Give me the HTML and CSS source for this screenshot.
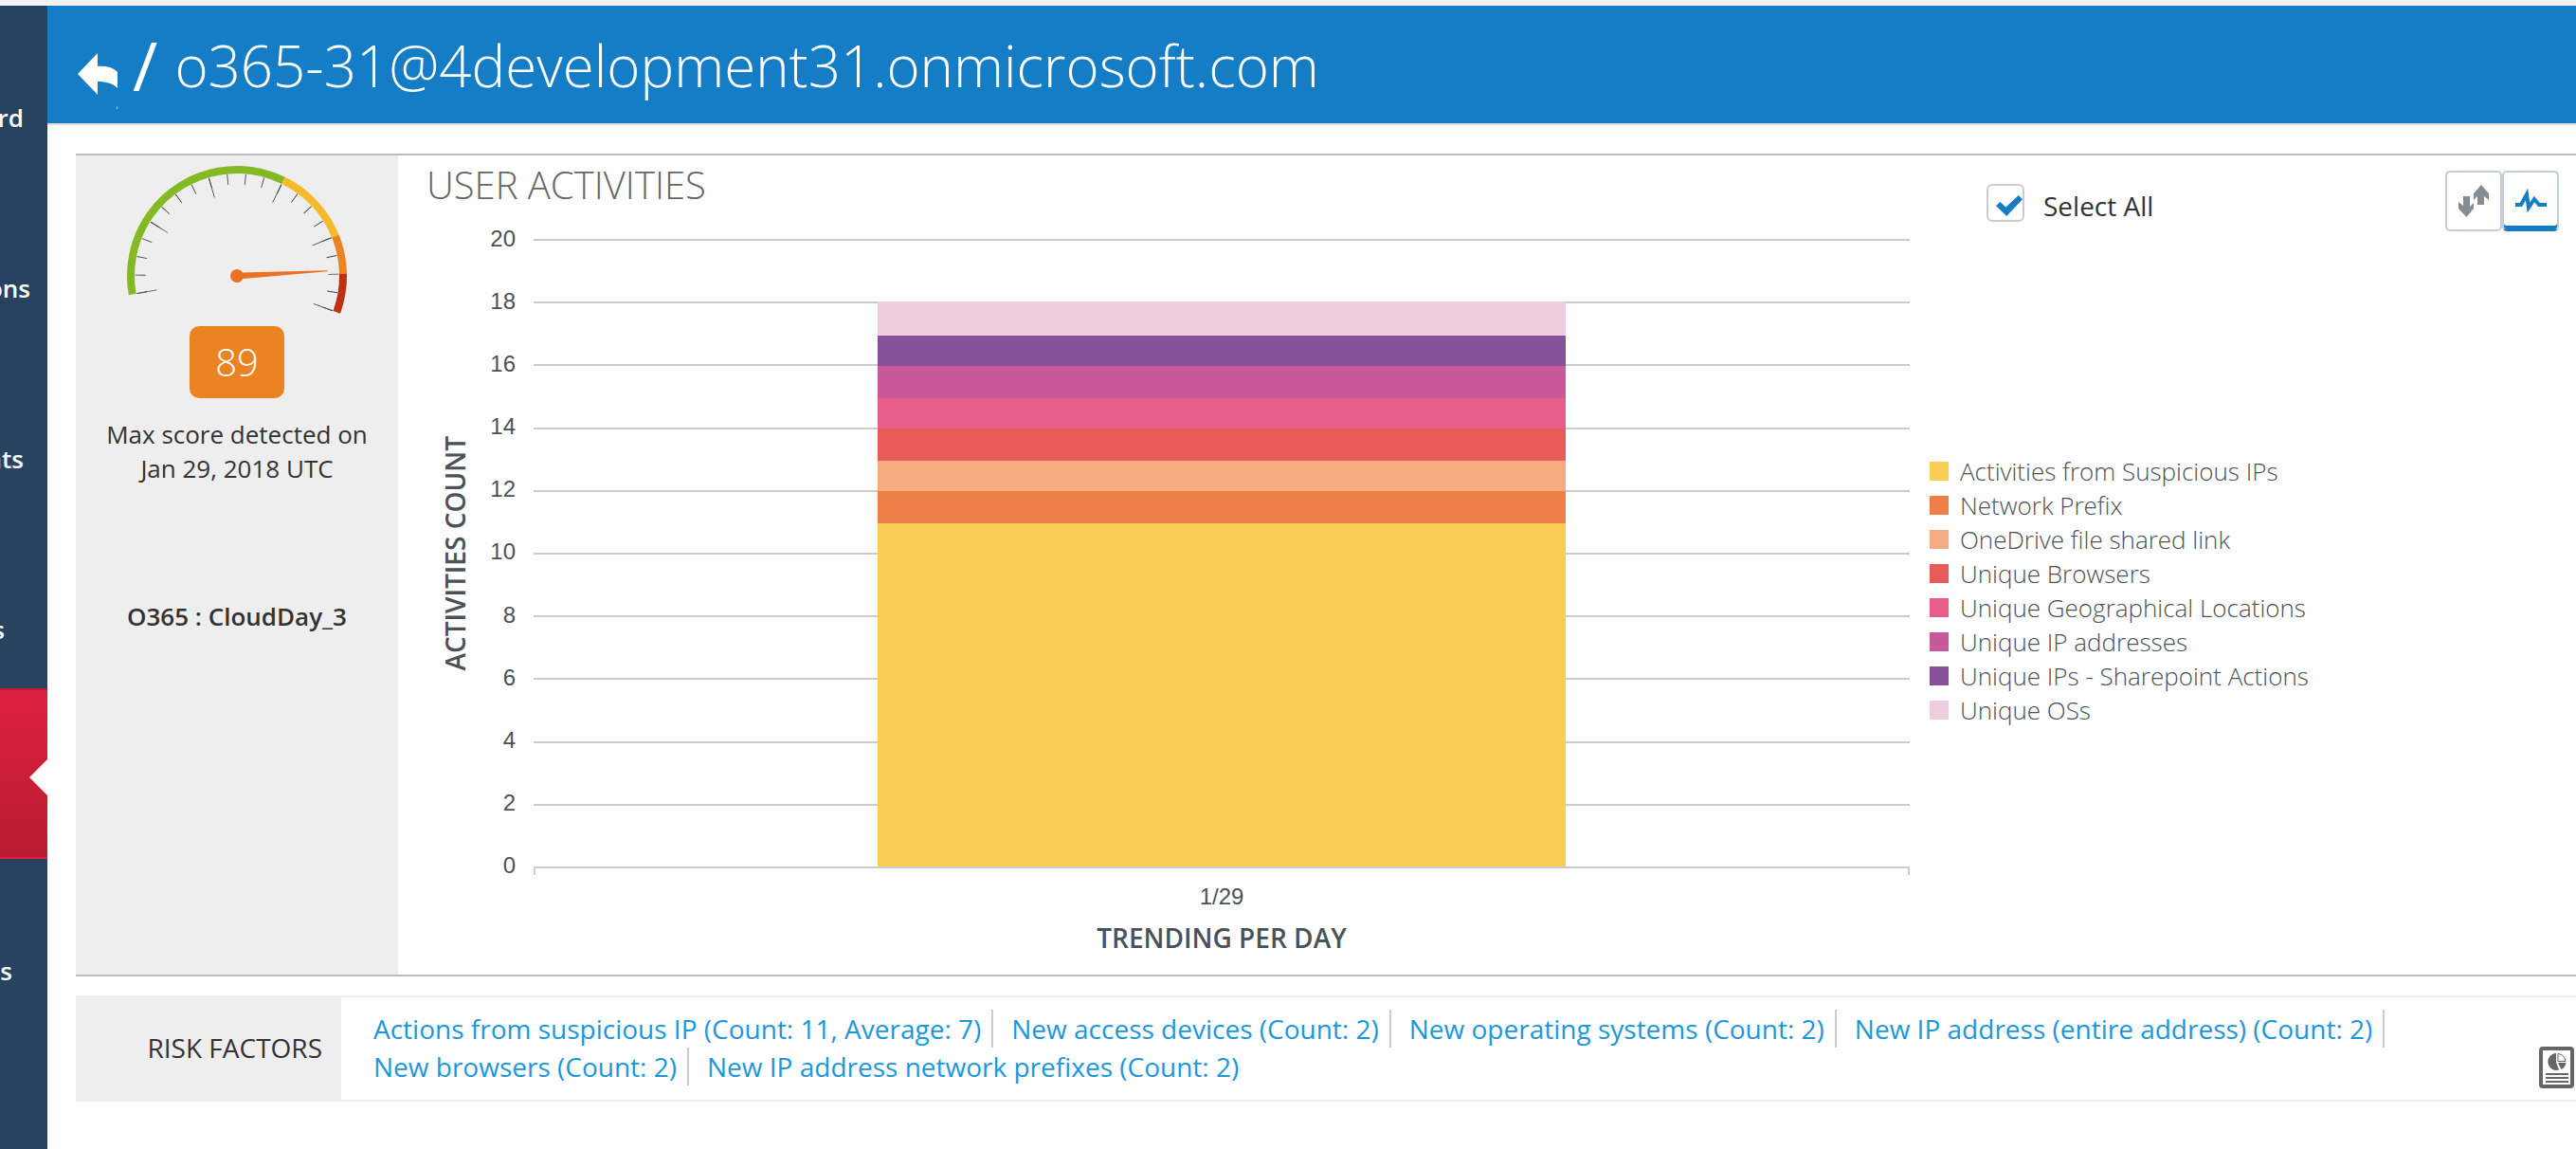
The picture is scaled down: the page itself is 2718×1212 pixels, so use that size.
FILE: index.html
```html
<!DOCTYPE html>
<html lang="en">
<head>
<meta charset="utf-8">
<title>User Activities</title>
<link rel="stylesheet" href="styles.css">
</head>
<body>
<div class="topstrip"></div>
<div class="shell">
  <nav class="sidebar">
    <a class="nav-item nav-item--wide" href="#">rd</a>
    <a class="nav-item nav-item--wider" href="#">ons</a>
    <a class="nav-item nav-item--wide" href="#">nts</a>
    <a class="nav-item nav-item--narrow" href="#">s</a>
    <a class="nav-item nav-item--active" href="#" aria-current="page"></a>
    <a class="nav-item nav-item--medium" href="#">ts</a>
  </nav>
  <div class="page">
    <header class="header">
      <button class="back" type="button" aria-label="Back">
        <svg width="42" height="62" viewBox="0 0 42 62"><path fill="#fff" d="M0 22 21 0v14c9-1 16 1 21 6v17c-5-5-12-7-21-7v14z"/><path fill="#fff" d="M42 55v4l-1 0z"/></svg>
      </button>
      <span class="slash">/</span>
      <h1 class="title">o365-31@4development31.onmicrosoft.com</h1>
    </header>
    <main class="content">
      <section class="overview">
        <aside class="score">
          <svg class="gauge" width="240" height="162" viewBox="-120 -118 240 162" fill="none">
            <g stroke="#444">
              <path stroke-width="11" pathLength="210.5" stroke-dasharray="0.5 10" d="M-100.37 18.15A102 102 0 1 1 95.7 35.3"/>
              <path stroke-width="21" pathLength="210.5" stroke-dasharray="0.5 41.5" d="M-94.96 17.17A96.5 96.5 0 1 1 90.54 33.4"/>
            </g>
            <g stroke-width="8">
              <circle r="112" pathLength="360" stroke="#83b922" stroke-dasharray="126 234" transform="rotate(170)"/>
              <circle r="112" pathLength="360" stroke="#f5ba2b" stroke-dasharray="42 318" transform="rotate(-64)"/>
              <circle r="112" pathLength="360" stroke="#eb8323" stroke-dasharray="21 339" transform="rotate(-22)"/>
              <circle r="112" pathLength="360" stroke="#bf3013" stroke-dasharray="21 339" transform="rotate(-1)"/>
            </g>
            <g fill="#ec7122" transform="rotate(-3.1)"><circle r="7"/><path d="M0-3.5 96-.5v1L0 3.5z"/></g>
          </svg>
          <div class="badge">89</div>
          <p class="score-note">Max score detected on<br>Jan 29, 2018 UTC</p>
          <p class="score-app">O365 : CloudDay_3</p>
        </aside>
        <div class="chart">
          <h2 class="chart-title">USER ACTIVITIES</h2>
          <div class="chart-body">
            <div class="y-title">ACTIVITIES COUNT</div>
            <div class="y-axis"><span>20</span><span>18</span><span>16</span><span>14</span><span>12</span><span>10</span><span>8</span><span>6</span><span>4</span><span>2</span><span>0</span></div>
            <div class="plot">
              <div class="grid"><i></i><i></i><i></i><i></i><i></i><i></i><i></i><i></i><i></i><i></i><i></i></div>
              <div class="bar">
                <div class="c-os" style="flex-grow:36"></div>
                <div class="c-sharepoint" style="flex-grow:32"></div>
                <div class="c-ip" style="flex-grow:34"></div>
                <div class="c-geo" style="flex-grow:32"></div>
                <div class="c-browser" style="flex-grow:34"></div>
                <div class="c-onedrive" style="flex-grow:32"></div>
                <div class="c-prefix" style="flex-grow:34"></div>
                <div class="c-suspicious" style="flex-grow:362"></div>
              </div>
            </div>
            <div class="x-label">1/29</div>
            <div class="x-title">TRENDING PER DAY</div>
          </div>
        </div>
        <div class="side">
          <div class="toolbar">
            <label class="select-all"><input type="checkbox" checked><span>Select All</span></label>
            <div class="toggle">
              <button type="button" aria-label="Up and down">
                <svg width="32" height="34" viewBox="0 0 32 34" fill="#878c90"><path d="M5 12h7v11l4-4v6L8.500 34 0 25v-7l5 4z"/><path d="M24 0 32 9v7l-5-4v9h-7v-9l-4 4V9z"/></svg>
              </button>
              <button class="on" type="button" aria-label="Trend">
                <svg width="34" height="26" viewBox="0 0 34 26" fill="none" stroke="#157cc6" stroke-width="4"><path d="M1 17h6l6-11 2 14 6-9 5 6h8"/></svg>
              </button>
            </div>
          </div>
          <ul class="legend">
            <li><i class="c-suspicious"></i>Activities from Suspicious IPs</li>
            <li><i class="c-prefix"></i>Network Prefix</li>
            <li><i class="c-onedrive"></i>OneDrive file shared link</li>
            <li><i class="c-browser"></i>Unique Browsers</li>
            <li><i class="c-geo"></i>Unique Geographical Locations</li>
            <li><i class="c-ip"></i>Unique IP addresses</li>
            <li><i class="c-sharepoint"></i>Unique IPs - Sharepoint Actions</li>
            <li><i class="c-os"></i>Unique OSs</li>
          </ul>
        </div>
      </section>
      <section class="risk">
        <h2 class="risk-title">RISK FACTORS</h2>
        <div class="risk-list">
          <a href="#">Actions from suspicious IP (Count: 11, Average: 7)</a>
          <a href="#">New access devices (Count: 2)</a>
          <a href="#">New operating systems (Count: 2)</a>
          <a href="#">New IP address (entire address) (Count: 2)</a>
          <a href="#">New browsers (Count: 2)</a>
          <a href="#">New IP address network prefixes (Count: 2)</a>
        </div>
        <button class="report" type="button" aria-label="Report">
          <svg width="37" height="44" viewBox="0 0 37 44" fill="none" stroke="#666"><rect x="2" y="2" width="33" height="40" rx="2" stroke-width="4"/><path fill="#666" stroke="none" d="M18 7a9 9 0 1 0 3 17.600l-3-8z"/><path d="M20 7.500a8.500 8.500 0 0 1 8 8h-8z"/><path fill="#666" stroke="none" d="M20 17h8.500a9 9 0 0 1-5 7z"/><path stroke-width="2" d="M7 29h24M7 33h24M7 37h24"/></svg>
        </button>
      </section>
    </main>
  </div>
</div>
</body>
</html>
```
FILE: styles.css
```css
*, *::before, *::after { box-sizing: border-box; }

body {
  margin: 0;
  min-height: 100vh;
  display: flex;
  flex-direction: column;
  background: #fefefe;
  color: #333;
  font-family: "Open Sans", sans-serif;
  font-size: 26px;
  line-height: 36px;
}

h1, h2, p, ul { margin: 0; padding: 0; font-weight: 400; }
ul { list-style: none; }
button { border: 0; padding: 0; background: none; cursor: pointer; }
svg { display: block; }
a { text-decoration: none; }

.topstrip { height: 6px; background: #f1f3f5; }
.shell { flex: 1; display: flex; }

/* Left navigation */
.sidebar { width: 50px; flex: none; background: #28435f; overflow: hidden; }
.nav-item {
  height: 180px;
  padding-top: 100px;
  display: flex;
  justify-content: flex-end;
  color: #fff;
  font-weight: 600;
}
.nav-item--wider { padding-right: 18px; }
.nav-item--wide { padding-right: 25px; }
.nav-item--medium { padding-right: 37px; }
.nav-item--narrow { padding-right: 45px; }
.nav-item--active {
  position: relative;
  border-top: 2px solid #b81c31;
  border-bottom: 2px solid #e01f42;
  background: linear-gradient(#dd203f, #b81d2e);
}
.nav-item--active::after {
  content: "";
  position: absolute;
  right: 0;
  top: 73px;
  border: 19px solid transparent;
  border-left: 0;
  border-right-color: #fff;
}

/* Page header */
.page { flex: 1; min-width: 0; }
.header {
  height: 126px;
  padding-left: 32px;
  display: flex;
  align-items: center;
  background: #157cc6;
  border-bottom: 2px solid #ddd;
  color: #fff;
}
.back { margin-top: 38px; }
.slash { margin: 0 18px 0 16px; font-size: 72px; line-height: 124px; }
.title { font-size: 60px; font-weight: 300; line-height: 124px; padding-top: 2px; }

.content { padding: 30px 0 50px 30px; }

/* Overview */
.overview {
  display: flex;
  border-top: 2px solid #bbb;
  border-bottom: 2px solid #bbb;
}
.score {
  width: 340px;
  flex: none;
  padding-top: 9px;
  display: flex;
  flex-direction: column;
  align-items: center;
  text-align: center;
  background: #eee;
}
.badge {
  width: 100px;
  margin: 9px 0 20px;
  border-radius: 10px;
  background: #eb8323;
  color: #fff;
  font-size: 40px;
  font-weight: 300;
  line-height: 76px;
}
.score-app { margin-top: 120px; font-weight: 600; }

/* Chart */
.chart { flex: 1; min-width: 0; padding: 0 0 21px 30px; }
.chart-title { color: #666; font-size: 40px; font-weight: 300; line-height: 62px; }
.chart-body {
  margin-top: 26px;
  display: grid;
  grid-template-columns: 60px 34px 1fr;
  color: #4a5257;
  text-align: center;
}
.y-title {
  align-self: center;
  writing-mode: vertical-rl;
  transform: rotate(180deg);
  font-size: 28px;
  font-weight: 600;
  line-height: 60px;
}
.y-axis {
  margin: -12px 0 -9px;
  display: flex;
  flex-direction: column;
  justify-content: space-between;
  font: 24px/24px "Liberation Sans", sans-serif;
  text-align: right;
}
.plot {
  height: 664px;
  margin-left: 19px;
  display: grid;
  justify-items: center;
  align-items: end;
}
.plot > * { grid-area: 1 / 1; }
.grid {
  position: relative;
  width: 100%;
  height: 100%;
  display: flex;
  flex-direction: column;
  justify-content: space-between;
}
.grid i { height: 2px; background: #ccc; }
.grid::after {
  content: "";
  position: absolute;
  top: 100%;
  width: 100%;
  height: 7px;
  border: solid #ccc;
  border-width: 0 2px;
}
.bar {
  position: relative;
  width: 50%;
  height: 596px;
  margin-bottom: 2px;
  display: flex;
  flex-direction: column;
}
.x-label { grid-column: 3; margin: 18px 0 0 19px; font: 24px/24px "Liberation Sans", sans-serif; }
.x-title { grid-column: 3; margin: 13px 0 0 19px; font-size: 28px; font-weight: 600; }

.c-suspicious { background: #facd55; }
.c-prefix { background: #ee8047; }
.c-onedrive { background: #f4ab7f; }
.c-browser { background: #e75b58; }
.c-geo { background: #e75e88; }
.c-ip { background: #c9599b; }
.c-sharepoint { background: #865199; }
.c-os { background: #eecddf; }

/* Controls and legend */
.side { width: 703px; flex: none; display: flex; flex-direction: column; }
.toolbar {
  padding: 16px 18px 0 81px;
  display: flex;
  justify-content: space-between;
  align-items: flex-start;
}
.select-all {
  margin-top: 14px;
  display: flex;
  align-items: flex-start;
  gap: 20px;
  font-size: 28px;
  line-height: 40px;
}
.select-all span { padding-top: 3px; }
.select-all input {
  appearance: none;
  width: 40px;
  height: 40px;
  margin: 0;
  border: 2px solid #ccc;
  border-radius: 6px;
  background: #fff;
  position: relative;
}
.select-all input:checked::after {
  content: "";
  position: absolute;
  inset: 10px 0 4px 8px;
  background: #157cc6;
  clip-path: polygon(0 50%, 16% 32%, 37% 57%, 85% 0, 100% 19%, 40% 100%);
}
.toggle { display: flex; }
.toggle button {
  width: 60px;
  height: 64px;
  display: flex;
  align-items: center;
  justify-content: center;
  border: 2px solid #c3cdd7;
  border-radius: 5px;
}
.toggle .on { box-shadow: inset 0 -4px #157cc6; border-bottom-color: #157cc6; }
.legend {
  flex: 1;
  display: flex;
  flex-direction: column;
  justify-content: center;
  padding: 0 0 26px 21px;
  color: #4a5257;
  font-weight: 300;
}
.legend li { display: flex; align-items: center; gap: 12px; }
.legend i { width: 20px; height: 20px; }

/* Risk factors */
.risk {
  margin-top: 20px;
  display: flex;
  border: solid #eee;
  border-width: 2px 0;
  font-size: 28px;
  line-height: 40px;
}
.risk-title {
  width: 280px;
  flex: none;
  padding: 0 20px 2px 0;
  display: flex;
  align-items: center;
  justify-content: flex-end;
  background: #eee;
  font-size: 28px;
}
.risk-list { flex: 1; padding: 13px 0 15px 34px; display: flex; flex-wrap: wrap; }
.risk-list a {
  margin-right: 19px;
  padding-right: 11px;
  border-right: 2px solid #ccc;
  color: #1b98dc;
}
.risk-list a:last-child { border: 0; }
.report { align-self: flex-end; margin: 0 2px 12px 0; }
```
